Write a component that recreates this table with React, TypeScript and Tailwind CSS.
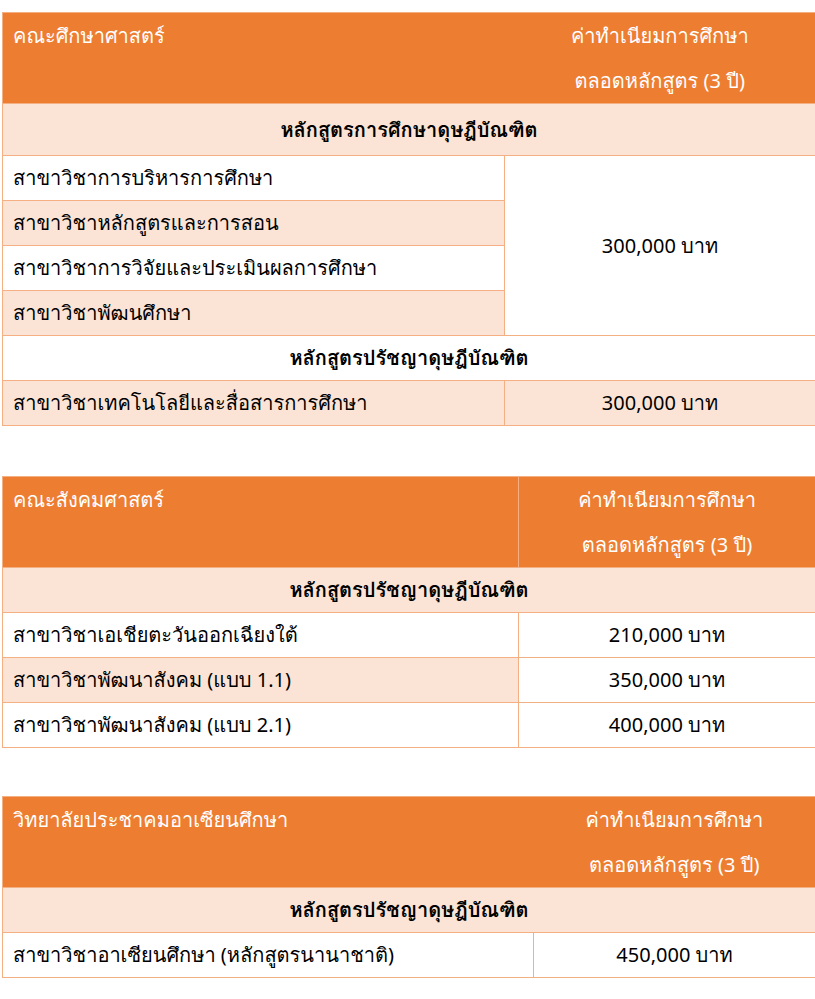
import React from "react";

function HeaderRow({ title, divider }: { title: string; divider: boolean }) {
  return (
    <tr className="bg-[#ED7D31] text-white">
      <td className={divider ? "align-top px-[10px] h-[90px] border-r border-r-[#F4B083]" : "align-top px-[10px] h-[90px]"}>
        <div className="h-[45px] flex items-center">{title}</div>
      </td>
      <td className="align-top text-center h-[90px]">
        <div className="h-[45px] flex items-center justify-center">ค่าทำเนียมการศึกษา</div>
        <div className="h-[45px] flex items-center justify-center">ตลอดหลักสูตร (3 ปี)</div>
      </td>
    </tr>
  );
}

function SubHeader({ text, peach, tall }: { text: string; peach: boolean; tall?: boolean }) {
  const bg = peach ? "bg-[#FBE4D5]" : "bg-white";
  const h = tall ? "h-[52px]" : "h-[45px]";
  return (
    <tr className={bg}>
      <td colSpan={2} className={`${h} text-center font-bold border border-[#F4B083]`}>
        {text}
      </td>
    </tr>
  );
}

function Row({
  name,
  price,
  peach,
  pricePeach,
}: {
  name: string;
  price?: string;
  peach: boolean;
  pricePeach?: boolean;
}) {
  return (
    <tr>
      <td className={peach ? "h-[45px] px-[10px] border border-[#F4B083] bg-[#FBE4D5]" : "h-[45px] px-[10px] border border-[#F4B083] bg-white"}>
        {name}
      </td>
      {price !== undefined && (
        <td className={pricePeach ? "h-[45px] text-center border border-[#F4B083] bg-[#FBE4D5]" : "h-[45px] text-center border border-[#F4B083] bg-white"}>
          {price}
        </td>
      )}
    </tr>
  );
}

export default function App() {
  return (
    <div className="bg-white w-[815px] min-h-[999px] pt-[12px] pl-[2px] text-[20px] text-black leading-none font-['Noto_Sans','Loma',sans-serif]">
      <table className="border-collapse w-[813px] table-fixed border border-[#F4B083]">
        <colgroup>
          <col className="w-[502px]" />
          <col className="w-[311px]" />
        </colgroup>
        <tbody>
          <HeaderRow title="คณะศึกษาศาสตร์" divider={false} />
          <SubHeader text="หลักสูตรการศึกษาดุษฎีบัณฑิต" peach tall />
          <tr>
            <td className="h-[45px] px-[10px] border border-[#F4B083] bg-white">สาขาวิชาการบริหารการศึกษา</td>
            <td rowSpan={4} className="text-center border border-[#F4B083] bg-white">
              300,000 บาท
            </td>
          </tr>
          <Row name="สาขาวิชาหลักสูตรและการสอน" peach />
          <Row name="สาขาวิชาการวิจัยและประเมินผลการศึกษา" peach={false} />
          <Row name="สาขาวิชาพัฒนศึกษา" peach />
          <SubHeader text="หลักสูตรปรัชญาดุษฎีบัณฑิต" peach={false} />
          <Row name="สาขาวิชาเทคโนโลยีและสื่อสารการศึกษา" price="300,000 บาท" peach pricePeach />
        </tbody>
      </table>

      <table className="mt-[50px] border-collapse w-[813px] table-fixed border border-[#F4B083]">
        <colgroup>
          <col className="w-[516px]" />
          <col className="w-[297px]" />
        </colgroup>
        <tbody>
          <HeaderRow title="คณะสังคมศาสตร์" divider />
          <SubHeader text="หลักสูตรปรัชญาดุษฎีบัณฑิต" peach />
          <Row name="สาขาวิชาเอเชียตะวันออกเฉียงใต้" price="210,000 บาท" peach={false} />
          <Row name="สาขาวิชาพัฒนาสังคม (แบบ 1.1)" price="350,000 บาท" peach />
          <Row name="สาขาวิชาพัฒนาสังคม (แบบ 2.1)" price="400,000 บาท" peach={false} />
        </tbody>
      </table>

      <table className="mt-[48px] border-collapse w-[813px] table-fixed border border-[#F4B083]">
        <colgroup>
          <col className="w-[531px]" />
          <col className="w-[282px]" />
        </colgroup>
        <tbody>
          <HeaderRow title="วิทยาลัยประชาคมอาเซียนศึกษา" divider={false} />
          <SubHeader text="หลักสูตรปรัชญาดุษฎีบัณฑิต" peach />
          <Row name="สาขาวิชาอาเซียนศึกษา (หลักสูตรนานาชาติ)" price="450,000 บาท" peach={false} />
        </tbody>
      </table>
    </div>
  );
}
